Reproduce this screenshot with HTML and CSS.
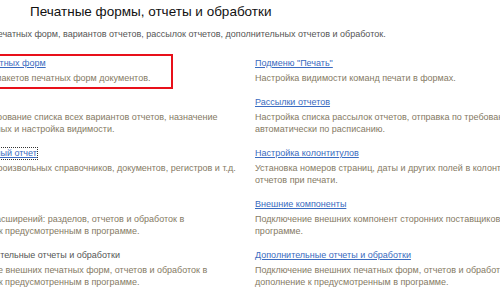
FILE: index.html
```html
<!DOCTYPE html>
<html>
<head>
    <title>Печатные формы, отчеты и обработки</title>
    <link rel="stylesheet" href="styles.css">
</head>
<body>
    <div class="page">
        <h1 class="title">Печатные формы, отчеты и обработки</h1>
        <p class="lead">Настройка печатных форм, вариантов отчетов, рассылок отчетов, дополнительных отчетов и обработок.</p>

        <div class="sections">
            <div class="item marked">
                <a href="#">Макеты печатных форм</a>
                <p class="desc">Изменение макетов печатных форм документов.</p>
                <span class="mark"></span>
            </div>
            <div class="item">
                <a href="#">Подменю "Печать"</a>
                <p class="desc">Настройка видимости команд печати в формах.</p>
            </div>

            <div class="item">
                <a href="#">Отчеты</a>
                <p class="desc">Администрирование списка всех вариантов отчетов, назначение<br>их в командных и настройка видимости.</p>
            </div>
            <div class="item">
                <a href="#">Рассылки отчетов</a>
                <p class="desc">Настройка списка рассылок отчетов, отправка по требованию и<br>автоматически по расписанию.</p>
            </div>

            <div class="item">
                <a href="#" class="focused">Универсальный отчет</a>
                <p class="desc">Данные из произвольных справочников, документов, регистров и т.д.</p>
            </div>
            <div class="item">
                <a href="#">Настройка колонтитулов</a>
                <p class="desc">Установка номеров страниц, даты и других полей в колонтитулах<br>отчетов при печати.</p>
            </div>

            <div class="item">
                <a href="#">Расширения</a>
                <p class="desc">Установка расширений: разделов, отчетов и обработок в<br>дополнение к предусмотренным в программе.</p>
            </div>
            <div class="item">
                <a href="#">Внешние компоненты</a>
                <p class="desc">Подключение внешних компонент сторонних поставщиков для использования в<br>программе.</p>
            </div>

            <div class="item">
                <label class="check"><span class="box"></span>Дополнительные отчеты и обработки</label>
                <p class="desc">Подключение внешних печатных форм, отчетов и обработок в<br>дополнение к предусмотренным в программе.</p>
            </div>
            <div class="item">
                <a href="#">Дополнительные отчеты и обработки</a>
                <p class="desc">Подключение внешних печатных форм, отчетов и обработок в<br>дополнение к предусмотренным в программе.</p>
            </div>
        </div>
    </div>
</body>
</html>
```

FILE: styles.css
```css
body {
    margin: 0;
    background: #fff;
    font-family: "Liberation Sans", Arial, sans-serif;
    overflow: hidden;
}
.page {
    margin-left: -54px;
    width: 900px;
}
.title {
    margin: 0;
    padding: 2px 0 0 84px;
    font-size: 13.5px;
    font-weight: normal;
    line-height: 20px;
    color: #111;
}
.lead {
    margin: 6px 0 0;
    font-size: 9px;
    line-height: 13px;
    color: #555;
}
.sections {
    display: grid;
    grid-template-columns: 297px 420px;
    column-gap: 12px;
    margin-top: 14px;
}
.item {
    padding-bottom: 10px;
    font-size: 9px;
}
.item a {
    display: inline-block;
    line-height: 17px;
    color: #3a6bc0;
    text-decoration: underline;
}
.item a.focused {
    line-height: 11px;
    margin: 3px 0;
    outline: 1px dotted #333;
    outline-offset: 0;
}
.desc {
    margin: 0;
    line-height: 12px;
    color: #857a64;
}
.check {
    display: flex;
    align-items: center;
    gap: 7px;
    line-height: 17px;
    color: #555;
}
.box {
    width: 9px;
    height: 9px;
    border: 1px solid #999;
}
.marked {
    position: relative;
}
.mark {
    position: absolute;
    top: -1px;
    left: -4px;
    width: 231px;
    height: 35px;
    box-sizing: border-box;
    border: 2px solid #e8101a;
}
```
